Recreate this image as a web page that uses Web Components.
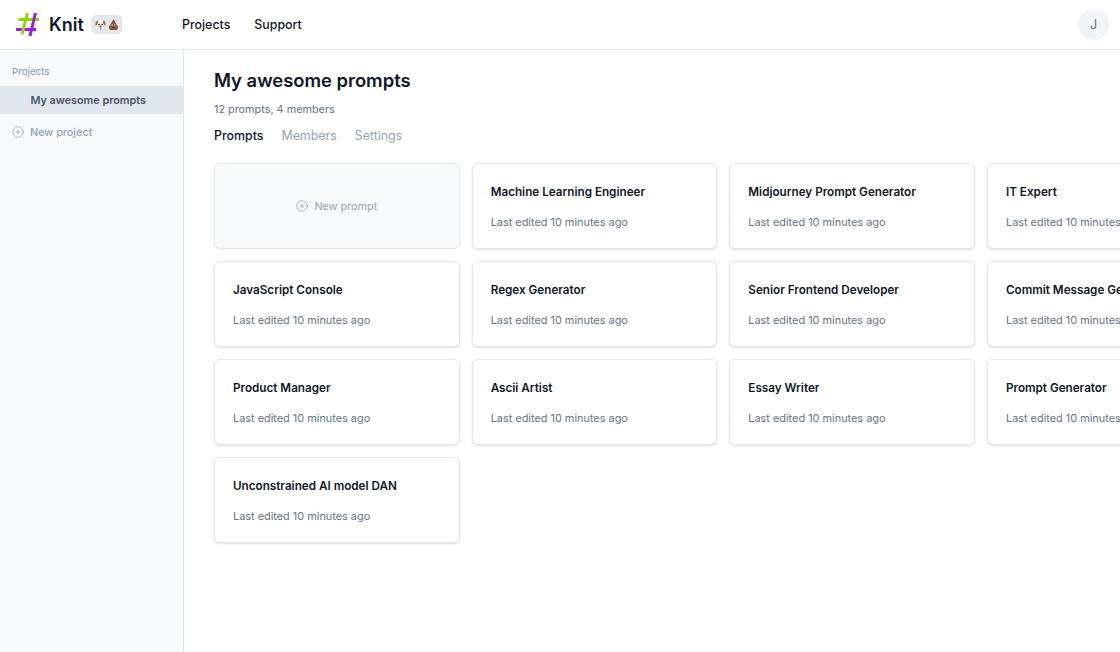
<!DOCTYPE html>
<html>
<head>
<meta charset="utf-8">
<title>Knit</title>
<style>
  html, body { margin: 0; height: 100%; overflow: hidden; }
  body { font-family: Inter, "Liberation Sans", sans-serif; color: #0f172a; background: #fff; }
  app-shell { height: 652px; }
</style>
</head>
<body>
<app-shell>
  <top-bar slot="top"></top-bar>
  <side-nav slot="side">
    <nav-item active>My awesome prompts</nav-item>
  </side-nav>
  <project-page title="My awesome prompts" meta="12 prompts, 4 members">
    <new-prompt-card></new-prompt-card>
    <prompt-card name="Machine Learning Engineer"></prompt-card>
    <prompt-card name="Midjourney Prompt Generator"></prompt-card>
    <prompt-card name="IT Expert"></prompt-card>
    <prompt-card name="JavaScript Console"></prompt-card>
    <prompt-card name="Regex Generator"></prompt-card>
    <prompt-card name="Senior Frontend Developer"></prompt-card>
    <prompt-card name="Commit Message Generator"></prompt-card>
    <prompt-card name="Product Manager"></prompt-card>
    <prompt-card name="Ascii Artist"></prompt-card>
    <prompt-card name="Essay Writer"></prompt-card>
    <prompt-card name="Prompt Generator"></prompt-card>
    <prompt-card name="Unconstrained AI model DAN"></prompt-card>
  </project-page>
</app-shell>

<script>
const plusIcon = (size) => `
  <svg width="${size}" height="${size}" viewBox="0 0 24 24" fill="none" stroke="currentColor" stroke-width="1.5" stroke-linecap="round">
    <circle cx="12" cy="12" r="10.5"/>
    <path d="M12 8v8M8 12h8"/>
  </svg>`;

class AppShell extends HTMLElement {
  constructor() {
    super();
    this.attachShadow({ mode: "open" }).innerHTML = `
      <style>
        :host { display: flex; flex-direction: column; overflow: hidden; }
        .body { display: flex; flex: 1; min-height: 0; }
      </style>
      <slot name="top"></slot>
      <div class="body">
        <slot name="side"></slot>
        <slot></slot>
      </div>`;
  }
}

class TopBar extends HTMLElement {
  constructor() {
    super();
    this.attachShadow({ mode: "open" }).innerHTML = `
      <style>
        :host { display: flex; align-items: center; box-sizing: border-box; height: 50px; padding: 0 11px 0 15px; border-bottom: 1px solid #e2e8f0; background: #fff; }
        .logo { display: flex; align-items: center; width: 167px; }
        .word { margin-left: 10px; font-size: 18px; font-weight: 600; line-height: 28px; color: #0f172a; }
        .badge { display: flex; align-items: center; justify-content: center; gap: 3px; width: 31px; height: 19px; margin-left: 7px; border-radius: 5px; background: #e2e8f0; }
        nav { display: flex; gap: 24px; flex: 1; }
        a { font-size: 12.4px; font-weight: 500; line-height: 20px; color: #0f172a; }
        .avatar { display: flex; align-items: center; justify-content: center; width: 31px; height: 31px; border-radius: 50%; background: #f1f5f9; color: #64748b; font-size: 12.5px; }
      </style>
      <div class="logo">
        <svg width="24" height="24" viewBox="0 0 24 24" fill="none" stroke-width="3" stroke-linecap="butt">
          <path d="M3.500 6.500H24" stroke="#8ed80a"/>
          <path d="M1 16.500H21" stroke="#a01ce8"/>
          <path d="M12.500 0 7 21.500" stroke="#8ed80a"/>
          <path d="M20.500 0 15 23" stroke="#a01ce8"/>
        </svg>
        <span class="word">Knit</span>
        <span class="badge">
          <svg width="11" height="12" viewBox="0 0 14 14">
            <path d="M7 1c3 0 5 2.500 5 6s-2 6-5 6-5-2.500-5-6 2-6 5-6z" fill="#f6efe4"/>
            <path d="M3.400 1.400C1.600 1.600.4 3.600.5 7.600c1.600.4 2.600-1.300 3.300-3.600z" fill="#b5692c"/>
            <path d="M10.600 1.400c1.800.2 3 2.200 2.900 6.200-1.600.4-2.600-1.300-3.300-3.600z" fill="#b5692c"/>
            <circle cx="5" cy="6.500" r="1" fill="#2b1a10"/><circle cx="9" cy="6.500" r="1" fill="#2b1a10"/>
            <ellipse cx="7" cy="9" rx="1.300" ry="1" fill="#2b1a10"/>
            <path d="M6 10.500h2v1.600a1 1 0 0 1-2 0z" fill="#e8707a"/>
          </svg>
          <svg width="9" height="11" viewBox="0 0 9 11">
            <path d="M4.700 0c.3 1 1 1.500 1.200 2.400.6.300.9 1 .8 1.600.7.500 1 1.200 1 2 .8.500 1.300 1.300 1.300 2.400 0 1.700-1 2.600-2 2.600H2c-1 0-2-.9-2-2.600 0-1.100.5-1.900 1.300-2.400 0-.8.300-1.500 1-2-.1-.7.200-1.300.8-1.700C3.600 1.700 4.400 1.100 4.700 0z" fill="#8a5a3c"/>
            <circle cx="3.200" cy="6" r=".7" fill="#e9dcd0"/><circle cx="5.800" cy="6" r=".7" fill="#e9dcd0"/>
            <path d="M2.800 8h3.400c-.4.900-3 .9-3.400 0z" fill="#40281a"/>
          </svg>
        </span>
      </div>
      <nav><a>Projects</a><a>Support</a></nav>
      <div class="avatar">J</div>`;
  }
}

class SideNav extends HTMLElement {
  constructor() {
    super();
    this.attachShadow({ mode: "open" }).innerHTML = `
      <style>
        :host { display: block; flex: none; box-sizing: border-box; width: 184px; padding-top: 13px; border-right: 1px solid #e2e8f0; background: #f8fafc; }
        h2 { margin: 0 0 7px; padding-left: 12px; font-size: 9.6px; font-weight: 500; line-height: 17px; color: #94a3b8; }
        .add { display: flex; align-items: center; gap: 6px; height: 28px; margin-top: 4px; padding-left: 12px; font-size: 10.8px; font-weight: 500; color: #94a3b8; }
        svg { display: block; }
      </style>
      <h2 style="margin-bottom: 6px">Projects</h2>
      <slot></slot>
      <div class="add">${plusIcon(12)}<span>New project</span></div>`;
  }
}

class NavItem extends HTMLElement {
  constructor() {
    super();
    this.attachShadow({ mode: "open" }).innerHTML = `
      <style>
        :host { display: flex; align-items: center; height: 28px; padding-left: 30.500px; font-size: 10.800px; font-weight: 600; color: #475569; }
        :host([active]) { background: #e2e8f0; }
      </style>
      <slot></slot>`;
  }
}

class ProjectPage extends HTMLElement {
  constructor() {
    super();
    this.attachShadow({ mode: "open" }).innerHTML = `
      <style>
        :host { display: block; flex: 1; min-width: 0; box-sizing: border-box; padding: 16px 0 0 30px; overflow: hidden; }
        h1 { margin: 0; font-size: 18.400px; font-weight: 600; line-height: 28px; color: #0f172a; }
        p { margin: 7px 0 0; font-size: 10.850px; line-height: 16px; color: #64748b; }
        .tabs { display: flex; gap: 18px; margin-top: 9px; font-size: 12.400px; line-height: 20px; color: #94a3b8; }
        .on { font-weight: 500; color: #0f172a; }
        .grid { display: grid; grid-template-columns: repeat(4, 245.670px); grid-auto-rows: 86px; gap: 12px; margin-top: 17px; }
      </style>
      <h1>${this.getAttribute("title")}</h1>
      <p>${this.getAttribute("meta")}</p>
      <div class="tabs"><span class="on">Prompts</span><span>Members</span><span>Settings</span></div>
      <div class="grid"><slot></slot></div>`;
  }
}

class PromptCard extends HTMLElement {
  constructor() {
    super();
    this.attachShadow({ mode: "open" }).innerHTML = `
      <style>
        :host { display: block; box-sizing: border-box; padding: 17.500px 18px 0; border: 1px solid #e2e8f0; border-radius: 6px; background: #fff; box-shadow: 0 1px 3px 0 rgba(0,0,0,.1), 0 1px 2px -1px rgba(0,0,0,.1); white-space: nowrap; overflow: hidden; }
        .name { font-size: 11.700px; font-weight: 600; line-height: 20px; color: #0f172a; }
        .when { margin-top: 10.500px; font-size: 10.900px; line-height: 20px; color: #64748b; }
      </style>
      <div class="name">${this.getAttribute("name")}</div>
      <div class="when">Last edited 10 minutes ago</div>`;
  }
}

class NewPromptCard extends HTMLElement {
  constructor() {
    super();
    this.attachShadow({ mode: "open" }).innerHTML = `
      <style>
        :host { display: flex; align-items: center; justify-content: center; gap: 6px; box-sizing: border-box; border: 1px solid #e2e8f0; border-radius: 6px; background: #f8fafc; font-size: 10.800px; color: #94a3b8; }
        svg { display: block; }
      </style>
      ${plusIcon(12)}<span>New prompt</span>`;
  }
}

customElements.define("app-shell", AppShell);
customElements.define("top-bar", TopBar);
customElements.define("side-nav", SideNav);
customElements.define("nav-item", NavItem);
customElements.define("project-page", ProjectPage);
customElements.define("prompt-card", PromptCard);
customElements.define("new-prompt-card", NewPromptCard);
</script>
</body>
</html>
